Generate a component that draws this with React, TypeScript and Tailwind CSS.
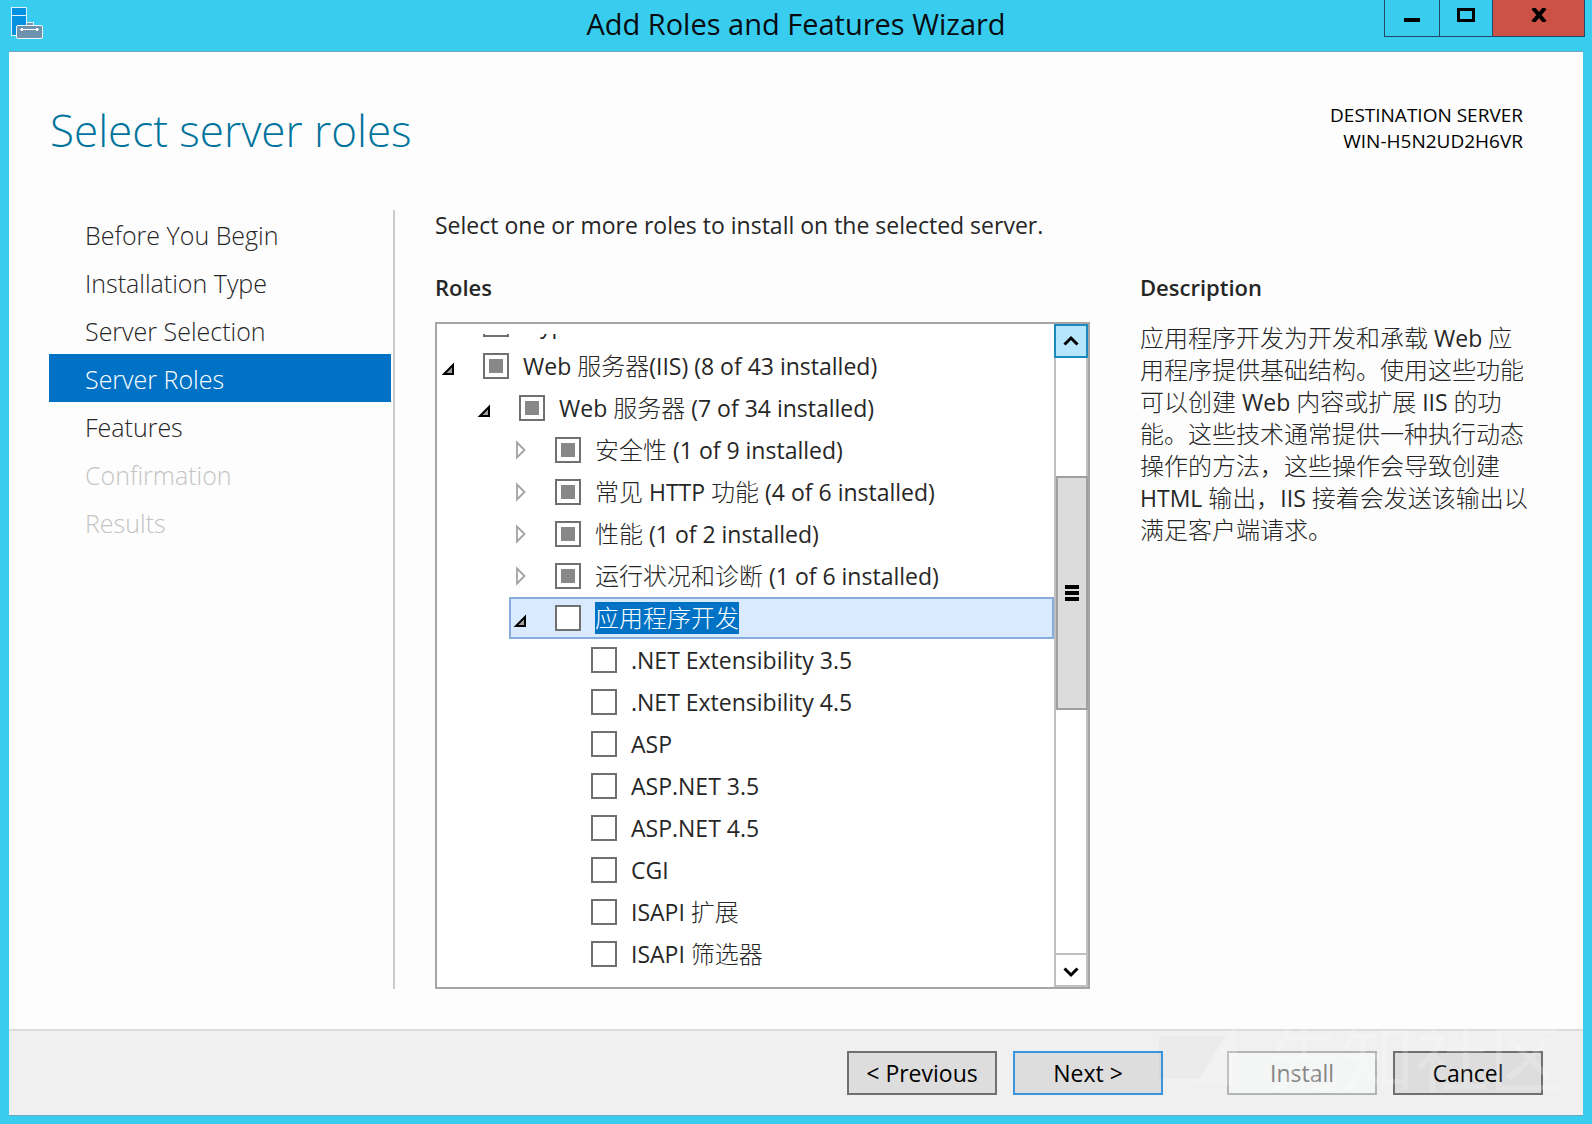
import React from "react";

type Role = {
  label: string;
  level: number;
  arrow?: "open" | "closed";
  partial?: boolean;
  selected?: boolean;
};

const steps = [
  { label: "Before You Begin" },
  { label: "Installation Type" },
  { label: "Server Selection" },
  { label: "Server Roles", current: true },
  { label: "Features" },
  { label: "Confirmation", disabled: true },
  { label: "Results", disabled: true },
];

const roles: Role[] = [
  { label: "Hyper-V", level: 0 },
  { label: "Web 服务器(IIS) (8 of 43 installed)", level: 0, arrow: "open", partial: true },
  { label: "Web 服务器 (7 of 34 installed)", level: 1, arrow: "open", partial: true },
  { label: "安全性 (1 of 9 installed)", level: 2, arrow: "closed", partial: true },
  { label: "常见 HTTP 功能 (4 of 6 installed)", level: 2, arrow: "closed", partial: true },
  { label: "性能 (1 of 2 installed)", level: 2, arrow: "closed", partial: true },
  { label: "运行状况和诊断 (1 of 6 installed)", level: 2, arrow: "closed", partial: true },
  { label: "应用程序开发", level: 2, arrow: "open", selected: true },
  { label: ".NET Extensibility 3.5", level: 3 },
  { label: ".NET Extensibility 4.5", level: 3 },
  { label: "ASP", level: 3 },
  { label: "ASP.NET 3.5", level: 3 },
  { label: "ASP.NET 4.5", level: 3 },
  { label: "CGI", level: 3 },
  { label: "ISAPI 扩展", level: 3 },
  { label: "ISAPI 筛选器", level: 3 },
];

const description = [
  "应用程序开发为开发和承载 Web 应",
  "用程序提供基础结构。使用这些功能",
  "可以创建 Web 内容或扩展 IIS 的功",
  "能。这些技术通常提供一种执行动态",
  "操作的方法，这些操作会导致创建",
  "HTML 输出，IIS 接着会发送该输出以",
  "满足客户端请求。",
];

const indents = ["pl-[46px]", "pl-[82px]", "pl-[118px]", "pl-[154px]"];

/* Han runs are set slightly larger and lighter than the Latin text around them. */
function Mixed({ text }: { text: string }) {
  const parts = text.split(/([\u3000-\u9fff\uff00-\uffef]+)/).filter(Boolean);
  return (
    <>
      {parts.map((p, i) =>
        /[\u3000-\u9fff\uff00-\uffef]/.test(p) ? (
          <span key={i} className="text-[24px] font-light">{p}</span>
        ) : (
          <span key={i}>{p}</span>
        ),
      )}
    </>
  );
}

function Arrow({ kind }: { kind: "open" | "closed" }) {
  return kind === "open" ? (
    <svg width="14" height="14" viewBox="0 0 14 14" aria-hidden="true">
      <path d="M12 3V12H3Z" fill="#a0a0a0" stroke="#000" strokeWidth="2" />
    </svg>
  ) : (
    <svg width="12" height="20" viewBox="0 0 12 20" aria-hidden="true">
      <path d="M2 2.5V17.5L9.5 10Z" fill="#fff" stroke="#a3a3a3" strokeWidth="1.8" />
    </svg>
  );
}

function RoleRow({ role, id }: { role: Role; id: string }) {
  return (
    <div className={`relative flex h-[42px] shrink-0 items-center ${indents[role.level]}`}>
      {role.selected && (
        <span className="absolute inset-y-0 left-[72px] right-0 border-2 border-[#86acdc] bg-[#d9e9fe]" />
      )}
      {role.arrow && (
        <button
          type="button"
          aria-label={`Toggle ${role.label}`}
          className={`relative -ml-[42px] flex h-5 w-[42px] ${role.arrow === "open" ? "items-end" : "items-center pl-[2px]"}`}
        >
          <Arrow kind={role.arrow} />
        </button>
      )}
      <input
        id={id}
        type="checkbox"
        className={`relative size-[26px] shrink-0 appearance-none border-2 border-[#707070] ${
          role.partial ? "bg-[#888] shadow-[inset_0_0_0_4px_#fff]" : "bg-white"
        }`}
      />
      <label htmlFor={id} className="relative ml-[14px] whitespace-nowrap text-[23px] leading-8 text-[#262626]">
        {role.selected ? (
          <span className="block bg-[#0072c6] text-white">
            <Mixed text={role.label} />
          </span>
        ) : (
          <Mixed text={role.label} />
        )}
      </label>
    </div>
  );
}

function AppIcon() {
  return (
    <svg width="34" height="34" viewBox="0 0 34 34" aria-hidden="true">
      <rect x="1.5" y="1.5" width="15" height="28" fill="#0491df" stroke="#dff4fc" />
      <path d="M1.5 9.5H16.5" stroke="#dff4fc" />
      <path d="M16.5 19V16.5H23.500V19" fill="#7b93a8" stroke="#dff4fc" />
      <rect x="6.500" y="19.500" width="26" height="13" rx="1.500" fill="#6f93ae" stroke="#eef8fc" />
      <path d="M10 23.500H29" stroke="#fff" />
      <path d="M11 22h2v3h-2zM26 22h2v3h-2z" fill="#fff" />
    </svg>
  );
}

function Watermark() {
  return (
    <div aria-hidden="true" className="pointer-events-none absolute bottom-[30px] right-[20px] flex items-end">
      <svg width="108" height="66" viewBox="0 0 108 66">
        <path d="M0 17H66L40 60H0Z" fill="#000" fillOpacity="0.018" />
        <path d="M78 0V66H24L44 58Z" fill="#fff" fillOpacity="0.18" />
      </svg>
      <span className="whitespace-nowrap text-[74px] leading-[54px] text-white/20">先知社区</span>
    </div>
  );
}

const footerButton = "h-11 w-[150px] border-2 text-[23px] leading-8";

export default function App() {
  return (
    <div className="flex min-h-screen flex-col bg-[#38ccee] px-[9px] pb-[8px] font-['Open_Sans','Noto_Sans_CJK_SC',sans-serif] text-[#262626]">
      <header className="relative flex h-[51px] shrink-0 items-center justify-center">
        <div className="absolute left-[1px] top-[6px]">
          <AppIcon />
        </div>
        <h1 className="pb-1 text-[29px] leading-9 text-[#080c10]">Add Roles and Features Wizard</h1>
        <div className="absolute -right-[2px] top-0 flex h-[37px] border border-t-0 border-[#1f4a66]">
          <button type="button" aria-label="Minimize" className="flex w-[55px] items-end justify-center border-r border-[#1f4a66] pb-[14px]">
            <span className="h-1 w-4 bg-black" />
          </button>
          <button type="button" aria-label="Maximize" className="flex w-[52px] items-start justify-center pt-[8px]">
            <span className="h-[14px] w-[18px] border-[3px] border-black" />
          </button>
          <button type="button" aria-label="Close" className="flex w-[92px] items-start justify-center border-l border-[#1f4a66] bg-[#cc5147] pt-[8px]">
            <svg width="16" height="14" viewBox="0 0 16 14" aria-hidden="true">
              <path d="M2 0L14 14M14 0L2 14" stroke="#000" strokeWidth="4" />
            </svg>
          </button>
        </div>
      </header>

      <div className="flex flex-1 flex-col border-y border-[#6fa5bd] bg-[#fdfdfd]">
        <div className="flex items-start justify-between pl-[41px] pr-[60px] pt-[46px]">
          <h2 className="text-[44px] font-light leading-[64px] text-[#00749c]">Select server roles</h2>
          <p className="pt-[4px] text-right text-[19px] leading-[26px] text-black">
            DESTINATION SERVER
            <br />
            WIN-H5N2UD2H6VR
          </p>
        </div>

        <div className="mb-10 mt-12 flex flex-1 items-stretch pr-[47px]">
          <nav className="ml-[40px] w-[346px] shrink-0 border-r-2 border-[#c9cbcc] pr-[2px]">
            {steps.map((s) => (
              <a
                key={s.label}
                href="#"
                className={`block h-12 pl-[36px] text-[25px] font-light leading-[50px] ${
                  s.current ? "bg-[#0072c6] text-white" : s.disabled ? "text-[#c4c4c4]" : "text-[#262626]"
                }`}
              >
                {s.label}
              </a>
            ))}
          </nav>

          <main className="ml-[40px] flex min-w-0 flex-1 flex-col">
            <p className="text-[23px] leading-[30px]">Select one or more roles to install on the selected server.</p>
            <div className="mt-8 flex flex-1 gap-[50px]">
              <section className="flex min-w-0 flex-1 flex-col">
                <h3 className="text-[22px] font-semibold leading-[30px]">Roles</h3>
                <div className="mt-5 flex flex-1 border-2 border-[#a6a6a6] bg-white">
                  <div className="mb-[12px] mt-[10px] flex h-[641px] min-w-0 flex-1 flex-col justify-end overflow-hidden">
                    {roles.map((r, i) => (
                      <RoleRow key={r.label} role={r} id={`role-${i}`} />
                    ))}
                  </div>
                  <div className="flex w-[34px] shrink-0 flex-col border-x-2 border-[#c0c0c0] bg-white">
                    <button type="button" aria-label="Scroll up" className="-mx-[2px] flex h-[34px] shrink-0 items-center justify-center border-2 border-[#1c88c0] bg-[#b5e6fd]">
                      <svg width="16" height="12" viewBox="0 0 16 12" aria-hidden="true">
                        <path d="M1.500 9.500L8 3L14.500 9.500" fill="none" stroke="#000" strokeWidth="3" />
                      </svg>
                    </button>
                    <div className="grow-[118] basis-0" />
                    <div className="-mr-[2px] flex grow-[230] basis-0 flex-col items-center justify-center gap-[2px] border-2 border-[#a0a0a0] bg-[#dcdcdc]">
                      <span className="h-1 w-[14px] bg-black" />
                      <span className="h-1 w-[14px] bg-black" />
                      <span className="h-1 w-[14px] bg-black" />
                    </div>
                    <div className="grow-[243] basis-0" />
                    <button type="button" aria-label="Scroll down" className="flex h-[34px] shrink-0 items-center justify-center border-y-2 border-[#c0c0c0] pt-[3px]">
                      <svg width="16" height="12" viewBox="0 0 16 12" aria-hidden="true">
                        <path d="M1.500 2.500L8 9L14.500 2.500" fill="none" stroke="#000" strokeWidth="3" />
                      </svg>
                    </button>
                  </div>
                </div>
              </section>
              <section className="w-[396px] shrink-0">
                <h3 className="text-[22px] font-semibold leading-[30px]">Description</h3>
                <p className="mt-5 text-[23px] leading-8">
                  {description.map((line) => (
                    <span key={line} className="block h-8 whitespace-nowrap">
                      <Mixed text={line} />
                    </span>
                  ))}
                </p>
              </section>
            </div>
          </main>
        </div>

        <footer className="relative flex h-[86px] shrink-0 items-center justify-end border-t-2 border-[#dadbdb] bg-[#f0f0f0] pr-[40px]">
          <button type="button" className={`${footerButton} border-[#707070] bg-[#dddddd] text-black`}>&lt; Previous</button>
          <button type="button" className={`${footerButton} ml-4 border-[#3c94dc] bg-[#dddddd] text-black`}>Next &gt;</button>
          <button type="button" disabled className={`${footerButton} ml-16 border-[#b2b3b4] bg-[#f4f5f5] text-[#868686]`}>Install</button>
          <button type="button" className={`${footerButton} ml-4 border-[#707070] bg-[#dddddd] text-black`}>Cancel</button>
          <Watermark />
        </footer>
      </div>
    </div>
  );
}
